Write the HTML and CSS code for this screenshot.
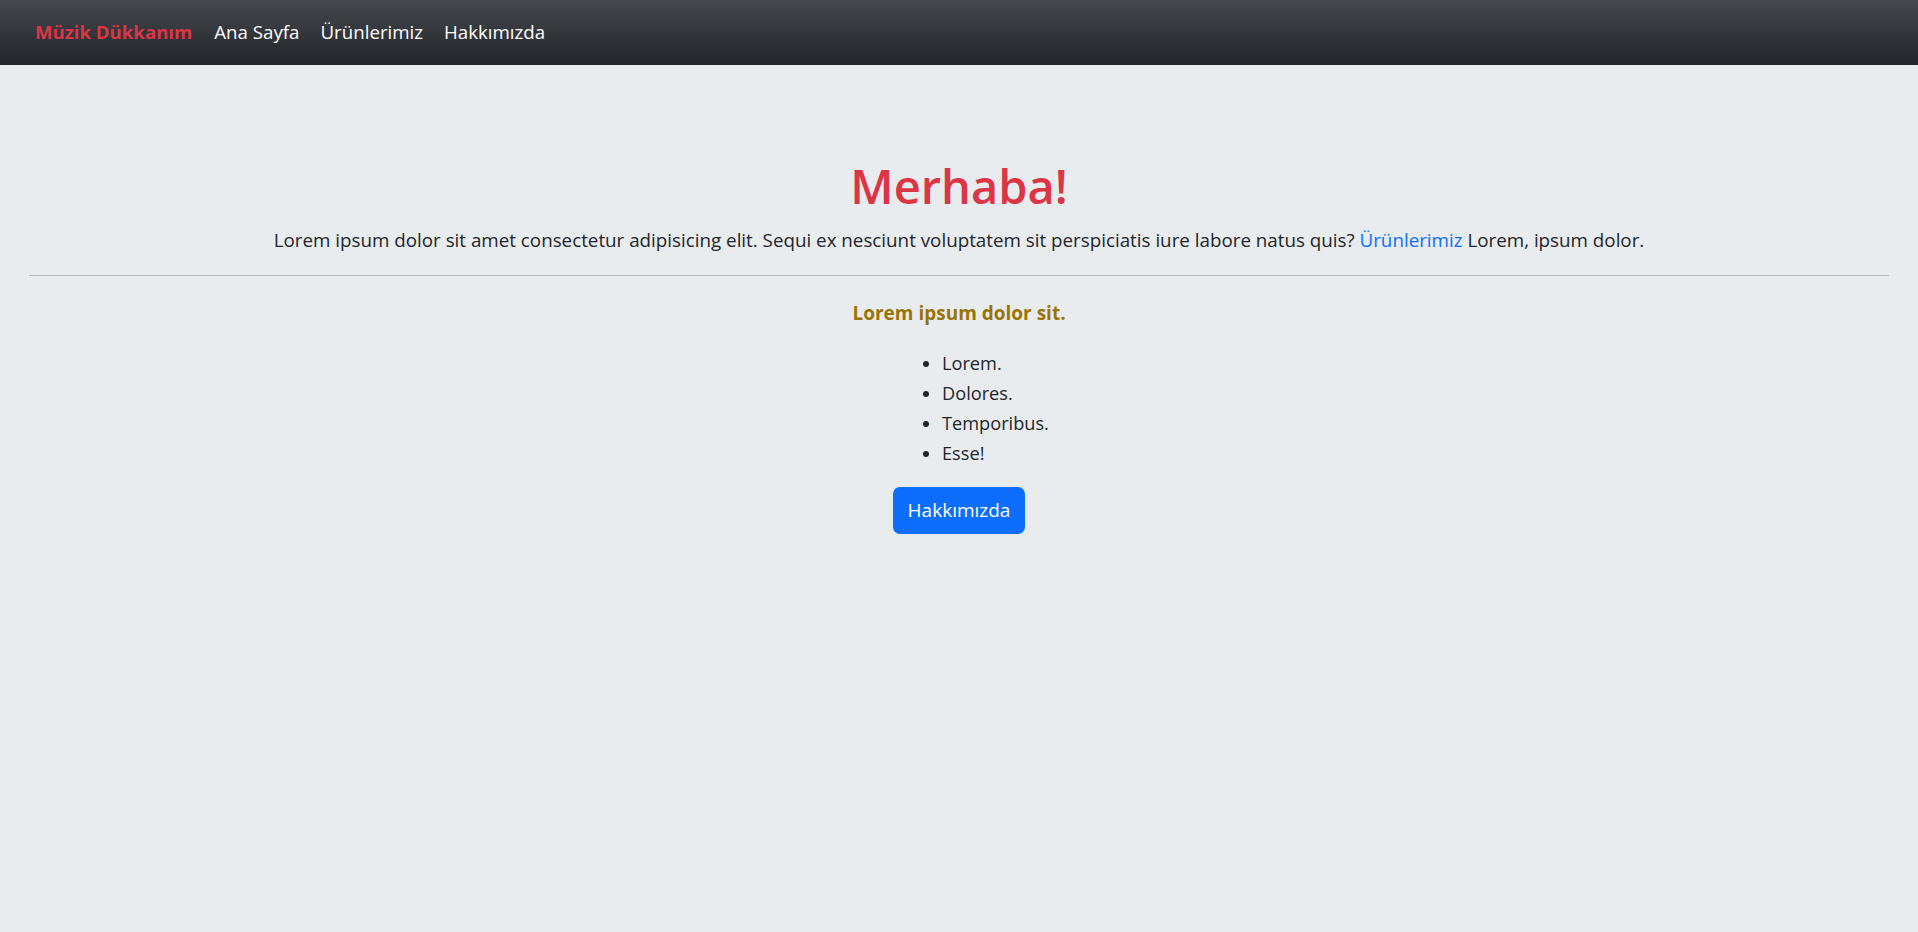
FILE: index.html
```html
<!DOCTYPE html>
<html lang="tr">
<head>
<meta charset="utf-8">
<title>Müzik Dükkanım</title>
<link rel="stylesheet" href="styles.css">
</head>
<body>
<nav class="navbar">
  <a class="brand" href="#">Müzik Dükkanım</a>
  <ul class="nav-links">
    <li><a class="nav-link" href="#">Ana Sayfa</a></li>
    <li><a class="nav-link" href="#">Ürünlerimiz</a></li>
    <li><a class="nav-link" href="#">Hakkımızda</a></li>
  </ul>
</nav>
<main class="hero">
  <h1 class="hero-title">Merhaba!</h1>
  <p class="lead-text">Lorem ipsum dolor sit amet consectetur adipisicing elit. Sequi ex nesciunt voluptatem sit perspiciatis iure labore natus quis? <a class="inline-link" href="#">Ürünlerimiz</a> Lorem, ipsum dolor.</p>
  <hr class="divider">
  <h5 class="subtitle">Lorem ipsum dolor sit.</h5>
  <ul class="item-list">
    <li>Lorem.</li>
    <li>Dolores.</li>
    <li>Temporibus.</li>
    <li>Esse!</li>
  </ul>
  <a class="btn-primary" href="#">Hakkımızda</a>
</main>
</body>
</html>
```

FILE: styles.css
```css
html, body {
  margin: 0;
  padding: 0;
}

body {
  background: #e9ecef;
  color: #212529;
  font-family: "Open Sans", "Noto Sans", sans-serif;
  font-size: 18.5px;
  line-height: 1.6;
}

.navbar {
  height: 65px;
  box-sizing: border-box;
  display: flex;
  align-items: center;
  padding: 0 35px 1px;
  background: linear-gradient(180deg, #45484c 0%, #212529 100%);
}

.brand {
  color: #dc3545;
  font-weight: 700;
  font-size: 18.6px;
  text-decoration: none;
  margin-right: 22px;
}

.nav-links {
  display: flex;
  gap: 21px;
  list-style: none;
  margin: 0;
  padding: 0;
}

.nav-link {
  color: #ffffff;
  font-size: 18.7px;
  text-decoration: none;
}

.hero {
  padding: 0 29px;
  text-align: center;
}

.hero-title {
  margin: 0;
  padding-top: 93px;
  font-size: 47px;
  font-weight: 600;
  line-height: 56px;
  color: #dc3545;
}

.lead-text {
  margin: 11px 0 0;
  font-size: 18.8px;
  line-height: 30px;
}

.inline-link {
  color: #0d6efd;
  text-decoration: none;
}

.divider {
  border: 0;
  border-top: 1px solid #b6b9bc;
  margin: 20px 0 0;
}

.subtitle {
  margin: 22px 0 0;
  font-size: 19px;
  font-weight: 700;
  line-height: 30px;
  color: #997404;
}

.item-list {
  margin: 20px 0 0;
  padding-left: calc(50% - 17px);
  text-align: left;
  font-size: 18.2px;
  line-height: 30px;
}

.btn-primary {
  display: inline-block;
  margin-top: 19px;
  padding: 9px 15px;
  background: #0d6efd;
  color: #ffffff;
  font-size: 19px;
  line-height: 29px;
  border-radius: 7px;
  text-decoration: none;
}
```
